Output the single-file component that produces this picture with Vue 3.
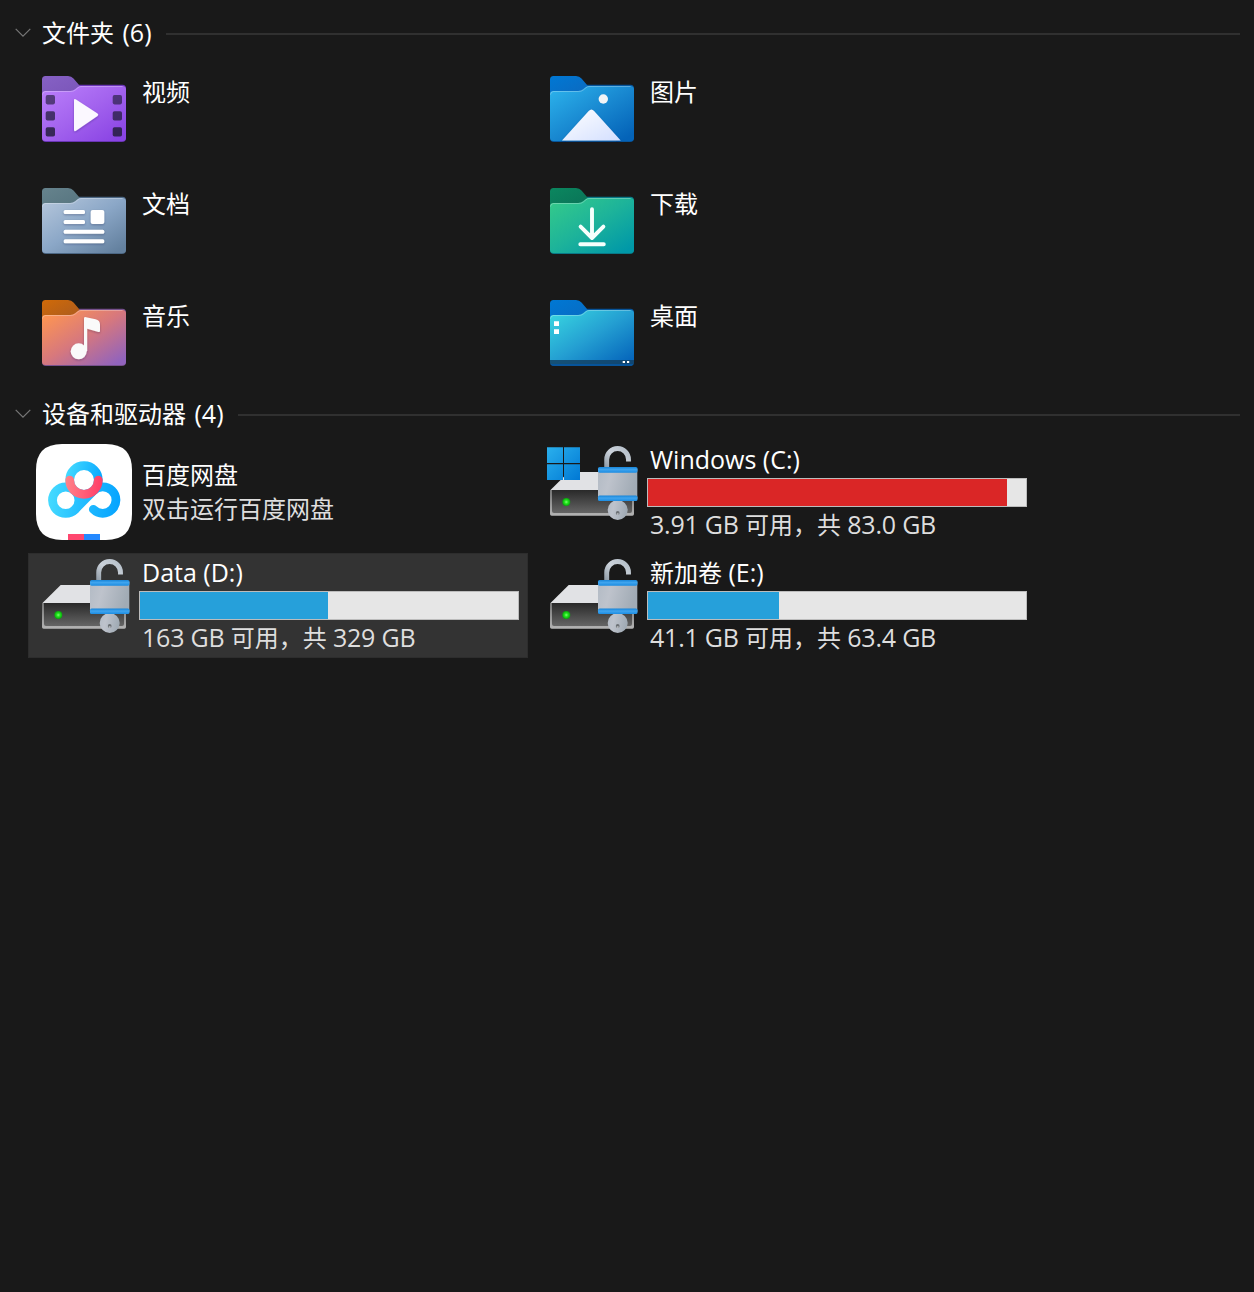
<script setup>
const folders = [
  { id: 'video', name: '视频', tab: ['#8661c5', '#7a55b8'], front: ['#b97dfa', '#a363ee', '#8a44e4'], edge: '#6a35b5' },
  { id: 'picture', name: '图片', tab: ['#0078d4', '#0c69bf'], front: ['#2bb0ea', '#1989d1', '#0463b8'], edge: '#07559c' },
  { id: 'document', name: '文档', tab: ['#66838d', '#56747f'], front: ['#b2c4da', '#8ba7c7', '#64819f'], edge: '#4c6784' },
  { id: 'download', name: '下载', tab: ['#0b875f', '#0a7257'], front: ['#33c98b', '#1db39a', '#0098a8'], edge: '#097987' },
  { id: 'music', name: '音乐', tab: ['#d06a08', '#a95b20'], front: ['#ff9650', '#d7787d', '#9163bd'], edge: '#77518d' },
  { id: 'desktop', name: '桌面', tab: ['#0078d4', '#086bc2'], front: ['#37d3e0', '#249fd2', '#0667bc'], edge: '#07549a' }
]

const drives = [
  { id: 'c', latin: 'Windows (C:)', free: '3.91 GB', total: '83.0 GB', used: 95, full: true, system: true },
  { id: 'd', latin: 'Data (D:)', free: '163 GB', total: '329 GB', used: 49.74, selected: true },
  { id: 'e', name: '新加卷', latin: ' (E:)', free: '41.1 GB', total: '63.4 GB', used: 34.66 }
]
</script>

<template>
  <main class="explorer">
    <section>
      <header class="group-head">
        <svg class="chevron" viewBox="0 0 16 10"><path d="M.7.9 8 8.2 15.3.9" /></svg>
        <h2>文件夹<span class="latin">{{ ' (6)' }}</span></h2>
        <i class="rule"></i>
      </header>
      <div class="grid folders">
        <article v-for="f in folders" :key="f.id" class="item">
          <svg class="icon" viewBox="0 0 96 96">
            <defs>
              <linearGradient :id="'tab-' + f.id" x1="0" y1="0" x2="1" y2="1">
                <stop offset="0" :stop-color="f.tab[0]" /><stop offset="1" :stop-color="f.tab[1]" />
              </linearGradient>
              <linearGradient :id="'front-' + f.id" gradientUnits="userSpaceOnUse" x1="22" y1="20" x2="66" y2="88">
                <stop offset="0" :stop-color="f.front[0]" /><stop offset=".5" :stop-color="f.front[1]" /><stop offset="1" :stop-color="f.front[2]" />
              </linearGradient>
              <linearGradient id="paper" x1="0" y1="0" x2="1" y2="1">
                <stop offset="0" stop-color="#fff" /><stop offset="1" stop-color="#d3dfff" />
              </linearGradient>
              <filter id="soft" x="-20%" y="-20%" width="140%" height="150%">
                <feDropShadow dx="0" dy="1" stdDeviation="1.2" flood-color="#142040" flood-opacity=".3" />
              </filter>
            </defs>
            <path :fill="f.edge" d="M6 30h30l7-6.3h43.5a3.5 3.5 0 0 1 3.5 3.500V77a4 4 0 0 1-4 4H10a4 4 0 0 1-4-4Z" />
            <path :fill="`url(#tab-${f.id})`" d="M6 34V18.500A3.500 3.500 0 0 1 9.500 15H32q3.500 0 5.500 2.500L43.500 24.500 38 32H6Z" />
            <path :fill="`url(#front-${f.id})`" d="M6 33.500a3.500 3.500 0 0 1 3.500-3.500H34q3 0 5-1.700L41.500 26.200Q43 25 45 25H86.500a3.500 3.500 0 0 1 3.500 3.500V76.500a3.500 3.500 0 0 1-3.500 3.500h-77A3.500 3.500 0 0 1 6 76.500Z" />
            <path fill="none" stroke="#fff" stroke-opacity=".28" d="M6.500 33.500a3 3 0 0 1 3-3H34.500q3 0 5-1.700L42 26.700Q43.300 25.500 45 25.500H86.500" />

            <g v-if="f.id === 'video'">
              <g fill="#231d3c">
                <rect v-for="n in 3" :key="'l' + n" x="9.700" :y="18 + n * 16.100" width="9.300" height="9.300" rx="1.800" :fill-opacity=".57 + n * .09" />
                <rect v-for="n in 3" :key="'r' + n" x="76.700" :y="18 + n * 16.100" width="9.300" height="9.300" rx="1.800" :fill-opacity=".57 + n * .09" />
              </g>
              <path filter="url(#soft)" fill="#fbf8ff" d="M38 39.500q0-2.300 2-1L61.500 52.400q1.600 1.300 0 2.700L40 69.800q-2 1.100-2-1Z" />
            </g>
            <g v-else-if="f.id === 'picture'">
              <circle cx="59.300" cy="38" r="4.700" fill="#f2f4f6" />
              <path filter="url(#soft)" fill="url(#paper)" d="M18 79.500 44.700 50.100q2.700-3.100 5.400 0L76.700 79.500Z" />
            </g>
            <g v-else-if="f.id === 'document'" fill="#fff" filter="url(#soft)">
              <rect x="27.700" y="37" width="21.300" height="4" rx="1.500" />
              <rect x="27.700" y="47" width="21.300" height="4" rx="1.500" />
              <rect x="54.700" y="37" width="13.600" height="14" rx="2" />
              <rect x="27.700" y="56.700" width="40.600" height="4" rx="1.500" />
              <rect x="27.700" y="66.300" width="40.600" height="4" rx="1.500" />
            </g>
            <g v-else-if="f.id === 'download'" fill="none" stroke="#f6fffc" stroke-width="3.900" stroke-linecap="round" stroke-linejoin="round">
              <path d="M48 36.300V65M36.600 53.600 48 65 59.400 53.600M36.300 71.300H59.800" />
            </g>
            <g v-else-if="f.id === 'music'" fill="#fafafa" filter="url(#soft)">
              <circle cx="42.700" cy="66.300" r="8" />
              <path d="M48 33.500q0-1.700 2-1.300L59.500 34.200Q64 35.300 64 39.500V46q0 1.400-1.500 1L51.200 43.800V66H48Z" />
            </g>
            <g v-else>
              <path fill="#123f62" fill-opacity=".82" d="M6 75h84v4H6Z" />
              <path fill="#07549a" d="M6.500 79h83q-1 2-3.500 2H10q-2.500 0-3.500-2Z" />
              <path fill="#fff" d="M10 36.300h5v4.700h-5ZM10 44.300h5v4.700h-5ZM78.700 76h2.300v2h-2.300ZM83 76h2.200v2H83Z" />
            </g>
          </svg>
          <div class="info"><div class="line">{{ f.name }}</div></div>
        </article>
      </div>
    </section>

    <section class="devices">
      <header class="group-head">
        <svg class="chevron" viewBox="0 0 16 10"><path d="M.7.9 8 8.2 15.3.9" /></svg>
        <h2>设备和驱动器<span class="latin">{{ ' (4)' }}</span></h2>
        <i class="rule"></i>
      </header>
      <div class="grid drives">
        <article class="item app">
          <svg class="icon" viewBox="0 0 96 96">
            <defs>
              <linearGradient id="cloud" gradientUnits="userSpaceOnUse" x1="12" y1="50" x2="84" y2="58">
                <stop offset="0" stop-color="#46dbff" /><stop offset=".5" stop-color="#22bcff" /><stop offset="1" stop-color="#06a4ff" />
              </linearGradient>
              <linearGradient id="cap" gradientUnits="userSpaceOnUse" x1="30" y1="25" x2="66" y2="34">
                <stop offset="0" stop-color="#46dbff" /><stop offset="1" stop-color="#08a8ff" />
              </linearGradient>
              <linearGradient id="smile" gradientUnits="userSpaceOnUse" x1="30" y1="36" x2="66" y2="40">
                <stop offset="0" stop-color="#ff8289" /><stop offset="1" stop-color="#ff3e68" />
              </linearGradient>
            </defs>
            <path fill="#fff" d="M26 0H70Q96 0 96 26V70Q96 96 70 96H26Q0 96 0 70V26Q0 0 26 0Z" />
            <g fill="none" stroke="url(#cloud)" stroke-width="8.800" stroke-linecap="round">
              <circle cx="29.700" cy="56.200" r="13.200" />
              <path d="M57.300 65.300A13.200 13.200 0 1 0 57.300 46.900L39 65.500" />
            </g>
            <circle cx="48" cy="36" r="14" fill="#fff" />
            <circle cx="48" cy="36" r="14.300" fill="none" stroke="url(#cap)" stroke-width="8.700" />
            <path fill="none" stroke="url(#smile)" stroke-width="8.700" stroke-linecap="round" d="M33.700 36A14.300 14.300 0 0 0 62.300 36" />
            <path fill="#ff476f" d="M32 90h16v6H32Z" /><path fill="#2589ff" d="M48 90h16v6H48Z" />
          </svg>
          <div class="info">
            <div class="line">百度网盘</div>
            <div class="line sub">双击运行百度网盘</div>
          </div>
        </article>

        <article v-for="d in drives" :key="d.id" class="item" :class="{ selected: d.selected }">
          <svg class="icon" viewBox="0 0 96 96">
            <defs>
              <linearGradient id="panel" x1="0" y1="0" x2="0" y2="1"><stop offset="0" stop-color="#292929" /><stop offset="1" stop-color="#656565" /></linearGradient>
              <linearGradient id="frame" x1="0" y1="0" x2="0" y2="1"><stop offset="0" stop-color="#757575" /><stop offset="1" stop-color="#b4b4b4" /></linearGradient>
              <linearGradient id="steel" x1="0" y1="0" x2="1" y2=".2"><stop offset="0" stop-color="#b3bbc5" /><stop offset=".35" stop-color="#bec3cc" /><stop offset="1" stop-color="#a1abb5" /></linearGradient>
              <linearGradient id="hook" x1="0" y1="1" x2="1" y2="0"><stop offset="0" stop-color="#8f9ba7" /><stop offset=".5" stop-color="#ccd3db" /><stop offset="1" stop-color="#b4bec8" /></linearGradient>
              <linearGradient id="band" x1="0" y1="0" x2="0" y2="1"><stop offset="0" stop-color="#1785d9" /><stop offset=".45" stop-color="#3fa4ee" /><stop offset="1" stop-color="#1b8ce2" /></linearGradient>
              <linearGradient id="win" gradientUnits="userSpaceOnUse" x1="3" y1="3" x2="36" y2="36"><stop offset="0" stop-color="#2ab0ed" /><stop offset="1" stop-color="#0078d4" /></linearGradient>
              <radialGradient id="led"><stop offset="0" stop-color="#7dff70" /><stop offset=".45" stop-color="#22e51c" /><stop offset="1" stop-color="#0aa00e" /></radialGradient>
            </defs>
            <path fill="#e1e2e5" d="M24.700 28H72L90 46.500H6Z" />
            <path fill="url(#frame)" d="M6 46h84V70q0 1.700-1.700 1.700H7.700Q6 71.700 6 70Z" />
            <path fill="url(#panel)" d="M8 46h80v21q0 2-2 2H10q-2 0-2-2Z" />
            <circle cx="22.300" cy="58" r="4" fill="url(#led)" />
            <path v-if="d.system" fill="url(#win)" d="M3 3.300h16V19H3ZM20 3.300h16V19H20ZM3 20.300h16V36H3ZM20 20.300h16V36H20Z" />
            <path fill="none" stroke="url(#hook)" stroke-width="4.900" d="M62.700 25V15.400a10.900 10.900 0 0 1 21.800 0V17.500" />
            <circle cx="73.700" cy="66" r="10" fill="url(#steel)" />
            <circle cx="73.700" cy="69" r="1.900" fill="#6c7075" /><path fill="#b9bdc0" d="M72.800 69.200h1.800v1.700h-1.800Z" />
            <rect x="54" y="25" width="39.300" height="30" fill="url(#steel)" />
            <rect x="54" y="23" width="39.500" height="5.700" rx="1.600" fill="url(#band)" />
            <rect x="54" y="51.600" width="39.500" height="5.500" rx="1.600" fill="url(#band)" />
          </svg>
          <div class="info">
            <div class="line">{{ d.name }}<span class="latin">{{ d.latin }}</span></div>
            <div class="meter" :class="{ full: d.full }"><i :style="{ width: d.used + '%' }"></i></div>
            <div class="line sub"><span class="latin size">{{ d.free + ' ' }}</span>可用，共<span class="latin size">{{ ' ' + d.total }}</span></div>
          </div>
        </article>
      </div>
    </section>
  </main>
</template>

<style>
body { margin: 0; background: #191919; }
</style>

<style scoped>
.explorer {
  box-sizing: border-box;
  min-height: 1292px;
  padding-top: 14px;
  background: #191919;
  color: #fff;
  font: 24px/32px "Noto Sans CJK SC", sans-serif;
}
.group-head {
  display: flex;
  align-items: center;
  height: 40px;
  padding: 0 14px 0 15px;
}
.chevron { width: 16px; height: 10px; margin: 0 11px 2px 0; fill: none; stroke: #777; stroke-width: 1.2; }
h2 { margin: 0; height: 36px; font: inherit; white-space: pre; }
.latin { font-family: "Open Sans", sans-serif; font-size: 25px; line-height: 1; }
h2 .latin { word-spacing: 2px; }
.size { letter-spacing: -.22px; }
.rule { flex: 1; height: 2px; margin-left: 14px; background: #303030; }
.grid { display: grid; grid-template-columns: 500px 500px; column-gap: 8px; row-gap: 8px; padding-left: 28px; }
.folders { padding-top: 3px; grid-auto-rows: 104px; }
.drives { padding-top: 5px; grid-auto-rows: 105px; }
.devices { padding-top: 10px; }
.item { box-sizing: border-box; display: flex; padding: 4px 8px; }
.selected { background: #333; box-shadow: inset 0 0 0 1px #2d2d2d; }
.icon { flex: none; width: 96px; height: 96px; }
.info { width: 380px; margin: -1px 0 0 7px; }
.line { padding-left: 3px; height: 32px; white-space: pre; }
.folders .info, .app .info { padding-top: 15px; }
.app .sub { margin-top: 2px; }
.sub { color: #dedede; }
.meter { box-sizing: border-box; height: 29px; margin: 3px 0 1px; border: 1px solid #bcbcbc; background: #e6e6e6; }
.meter i { display: block; height: 100%; background: #26a0da; }
.meter.full i { background: #da2626; }
</style>
